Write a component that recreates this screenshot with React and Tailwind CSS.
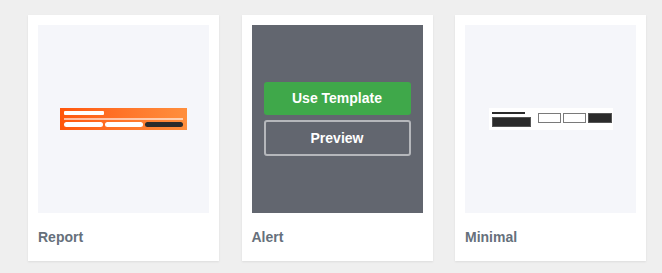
const templates = [
  { name: 'Report', kind: 'report' },
  { name: 'Alert', kind: 'alert' },
  { name: 'Minimal', kind: 'minimal' },
]

function ReportThumb() {
  return (
    <div className="w-[127px] h-[22px] bg-gradient-to-r from-[#ff560a] to-[#ff8f3d] px-[4px] pt-[3px] flex flex-col">
      <div className="w-[40px] h-[4px] bg-white rounded-[1px]" />
      <div className="mt-[3px] h-[2px] bg-white/60" />
      <div className="mt-[2px] flex gap-[2px]">
        <div className="w-[39px] h-[5px] bg-white rounded-full" />
        <div className="w-[38px] h-[5px] bg-white rounded-full" />
        <div className="w-[38px] h-[5px] bg-[#2b2b2b] rounded-full" />
      </div>
    </div>
  )
}

function MinimalThumb() {
  return (
    <div className="w-[124px] h-[22px] bg-white flex items-center pl-[3px] gap-[7px]">
      <div className="flex flex-col gap-[3px]">
        <div className="w-[33px] h-[2px] bg-[#2b2b2b]" />
        <div className="w-[39px] h-[10px] bg-[#2b2b2b] border border-[#555]" />
      </div>
      <div className="flex gap-[2px] -mt-[3px]">
        <div className="w-[23px] h-[10px] bg-white border border-[#7a7a7a]" />
        <div className="w-[23px] h-[10px] bg-white border border-[#7a7a7a]" />
        <div className="w-[24px] h-[10px] bg-[#2b2b2b] border border-[#555]" />
      </div>
    </div>
  )
}

function Preview({ kind }) {
  if (kind === 'alert') {
    return (
      <div className="h-[188px] bg-[#62666f] flex flex-col justify-center px-[12px] gap-[5px]">
        <button className="h-[33px] rounded-[3px] bg-[#3fa84a] text-white text-[14px] font-bold">
          Use Template
        </button>
        <button className="h-[36px] rounded-[3px] border-2 border-[#b5b7bb] text-white text-[14px] font-bold">
          Preview
        </button>
      </div>
    )
  }
  return (
    <div className="h-[188px] bg-[#f5f6fa] flex items-center justify-center">
      {kind === 'report' ? <ReportThumb /> : <MinimalThumb />}
    </div>
  )
}

export default function App() {
  return (
    <div className="w-[662px] h-[273px] bg-[#efefef] pl-[28px] pt-[15px] font-['Liberation_Sans',Arial,sans-serif]">
      <div className="flex gap-[22.5px]">
        {templates.map((t) => (
          <div key={t.name} className="w-[191px] h-[246px] bg-white p-[10px] shadow-[0_1px_2px_rgba(0,0,0,0.08)]">
            <Preview kind={t.kind} />
            <div className="pt-[14px] text-[14px] leading-[20px] font-bold text-[#66707b]">{t.name}</div>
          </div>
        ))}
      </div>
    </div>
  )
}
